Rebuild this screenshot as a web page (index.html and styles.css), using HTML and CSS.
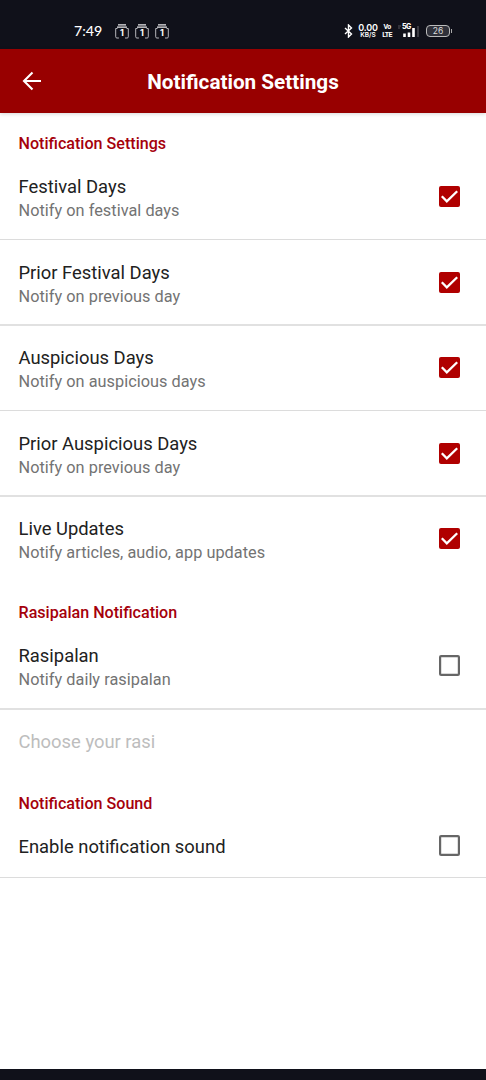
FILE: index.html
```html
<!DOCTYPE html>
<html lang="en">
<head>
<meta charset="utf-8">
<title>Notification Settings</title>
<link rel="stylesheet" href="styles.css">
</head>
<body>
<svg class="defs" aria-hidden="true">
  <symbol id="calendar" viewBox="0 0 14 15">
    <path d="M3 .8h8M2 3.2h10" stroke="#e8e8ea" stroke-width="1.2"/>
    <path d="M2.500 4.500H.7v8.300q0 1.200 1.200 1.200h2M10 14h2.100q1.200 0 1.200-1.200V4.500h-1.800" fill="none" stroke="#b5b5ba" stroke-width="1"/>
  </symbol>
  <symbol id="checked" viewBox="0 0 21 21">
    <rect width="21" height="21" rx="2" fill="#b00000"/>
    <path d="M2.800 10.300l5 5L18.200 5.200" fill="none" stroke="#fff" stroke-width="2.300"/>
  </symbol>
  <symbol id="unchecked" viewBox="0 0 21 21">
    <rect x="1.100" y="1.100" width="18.800" height="18.800" rx="1" fill="none" stroke="#666" stroke-width="2.200"/>
  </symbol>
</svg>
<div class="screen">
  <div class="status">
    <span class="clock">7:49</span>
    <div class="events">
      <span class="event"><svg><use href="#calendar"/></svg><b>1</b></span>
      <span class="event"><svg><use href="#calendar"/></svg><b>1</b></span>
      <span class="event"><svg><use href="#calendar"/></svg><b>1</b></span>
    </div>
    <div class="system">
      <svg class="bluetooth" viewBox="0 0 9 14"><path d="M1 4l6.500 6L4.500 13V1l3 3L1 10" fill="none" stroke="#fff" stroke-width="1.400"/></svg>
      <span class="speed"><span class="rate">0.00</span><span class="unit">KB/S</span></span>
      <span class="volte"><span>Vo</span><span>LTE</span></span>
      <span class="signal">
        <svg viewBox="0 0 22 14"><path d="M0 2h3M0 4h2" stroke="#55555b"/><path d="M6.500 9.500V13M11 8.500V13M15.500 4v9" stroke="#fff" stroke-width="2.600"/><path d="M20 2v11" stroke="#3b3b43" stroke-width="2"/></svg>
        <b>5G</b>
      </span>
      <span class="battery">26</span>
    </div>
  </div>
  <header class="appbar">
    <svg class="back" viewBox="0 0 20 20"><path d="M19 10H2M10.500 1.500L2 10l8.500 8.500" fill="none" stroke="#fff" stroke-width="2.100"/></svg>
    <h1>Notification Settings</h1>
  </header>
  <main>
    <h2>Notification Settings</h2>
    <div class="row"><div><p class="title">Festival Days</p><p class="summary">Notify on festival days</p></div><svg class="box"><use href="#checked"/></svg></div>
    <div class="row thick"><div><p class="title">Prior Festival Days</p><p class="summary">Notify on previous day</p></div><svg class="box"><use href="#checked"/></svg></div>
    <div class="row snug"><div><p class="title">Auspicious Days</p><p class="summary">Notify on auspicious days</p></div><svg class="box"><use href="#checked"/></svg></div>
    <div class="row thick"><div><p class="title">Prior Auspicious Days</p><p class="summary">Notify on previous day</p></div><svg class="box"><use href="#checked"/></svg></div>
    <div class="row snug last"><div><p class="title">Live Updates</p><p class="summary">Notify articles, audio, app updates</p></div><svg class="box"><use href="#checked"/></svg></div>
    <h2>Rasipalan Notification</h2>
    <div class="row thick tall"><div><p class="title">Rasipalan</p><p class="summary">Notify daily rasipalan</p></div><svg class="box"><use href="#unchecked"/></svg></div>
    <div class="row choice last disabled"><p class="title">Choose your rasi</p></div>
    <h2>Notification Sound</h2>
    <div class="row short"><p class="title">Enable notification sound</p><svg class="box"><use href="#unchecked"/></svg></div>
  </main>
  <div class="navbar"></div>
</div>
</body>
</html>
```
FILE: styles.css
```css
* { box-sizing: border-box; }
body, h1, h2, p { margin: 0; }
body { font-family: Roboto, sans-serif; background: #fff; }
.defs { display: none; }
.screen { width: 486px; height: 1080px; display: flex; flex-direction: column; overflow: hidden; }
.status { height: 49px; flex: none; display: flex; align-items: center; padding: 13px 36px 0 74px; background: #10111a; color: #fff; }
.clock { width: 41px; font: 500 14.2px/18px Lato, sans-serif; }
.events { display: flex; gap: 6px; }
.event { position: relative; width: 14px; height: 15px; }
.event svg { display: block; width: 14px; height: 15px; }
.event b { position: absolute; inset: 3px 0 0; font: 700 9px/12px Inter, sans-serif; text-align: center; }
.system { display: flex; align-items: center; margin-left: auto; }
.bluetooth { width: 9px; height: 14px; margin-right: 5px; }
.speed, .volte { display: flex; flex-direction: column; align-items: center; font-family: Inter, sans-serif; }
.speed { width: 20px; margin-right: 4px; }
.rate { font-size: 9px; line-height: 9px; font-weight: 600; letter-spacing: -.2px; }
.unit { font-size: 6.5px; line-height: 7px; font-weight: 600; }
.volte { width: 10px; margin-right: 6px; font-family: Roboto, sans-serif; font-size: 7px; line-height: 8px; font-weight: 700; letter-spacing: -.6px; }
.signal { position: relative; width: 22px; height: 14px; margin-right: 6px; }
.signal svg { display: block; width: 22px; height: 14px; }
.signal b { position: absolute; left: 4px; top: -1px; font: 800 7px/8px Inter, sans-serif; letter-spacing: -.5px; }
.battery { position: relative; width: 24px; height: 12px; border: 1px solid #bbb; border-radius: 4px; background: #30313a; color: #ddd; font: 400 8.5px/10px Inter, sans-serif; text-align: center; }
.battery::after { content: ""; position: absolute; right: -2.500px; top: 3px; width: 1px; height: 4px; background: #aaa; }
.appbar { position: relative; height: 64px; flex: none; display: grid; grid-template-columns: 64px 1fr 64px; align-items: center; background: #980000; color: #fff; box-shadow: 0 1px 4px rgba(0,0,0,.16); }
.back { width: 20px; height: 20px; margin-left: 22px; }
h1 { font-size: 20.7px; line-height: 24px; font-weight: 700; text-align: center; padding-top: 2px; }
main { flex: 1; }
h2 { height: 41px; padding: 20px 18.5px 0; font-size: 16.1px; line-height: 22px; font-weight: 500; color: #a5000b; }
.row { height: 86px; display: flex; align-items: center; justify-content: space-between; padding: 0 26.5px 0 18.5px; border-bottom: 1px solid #dcdcdc; }
.thick { border-bottom: 2px solid #e1e1e1; }
.row.last { border-bottom-color: transparent; }
.snug { height: 85px; padding-bottom: 1.5px; }
.tall { height: 87px; }
.short { height: 64px; }
.choice { height: 63px; }
.title { font-size: 18.4px; line-height: 24px; color: #212121; padding-top: 4px; }
.short .title, .choice .title { padding-top: 2px; }
.summary { font-size: 16.3px; line-height: 23px; color: #737373; letter-spacing: .03px; }
.disabled .title { color: #bdbdbd; }
.box { width: 21px; height: 21px; flex: none; }
.navbar { height: 11px; flex: none; background: #10111a; }
```
